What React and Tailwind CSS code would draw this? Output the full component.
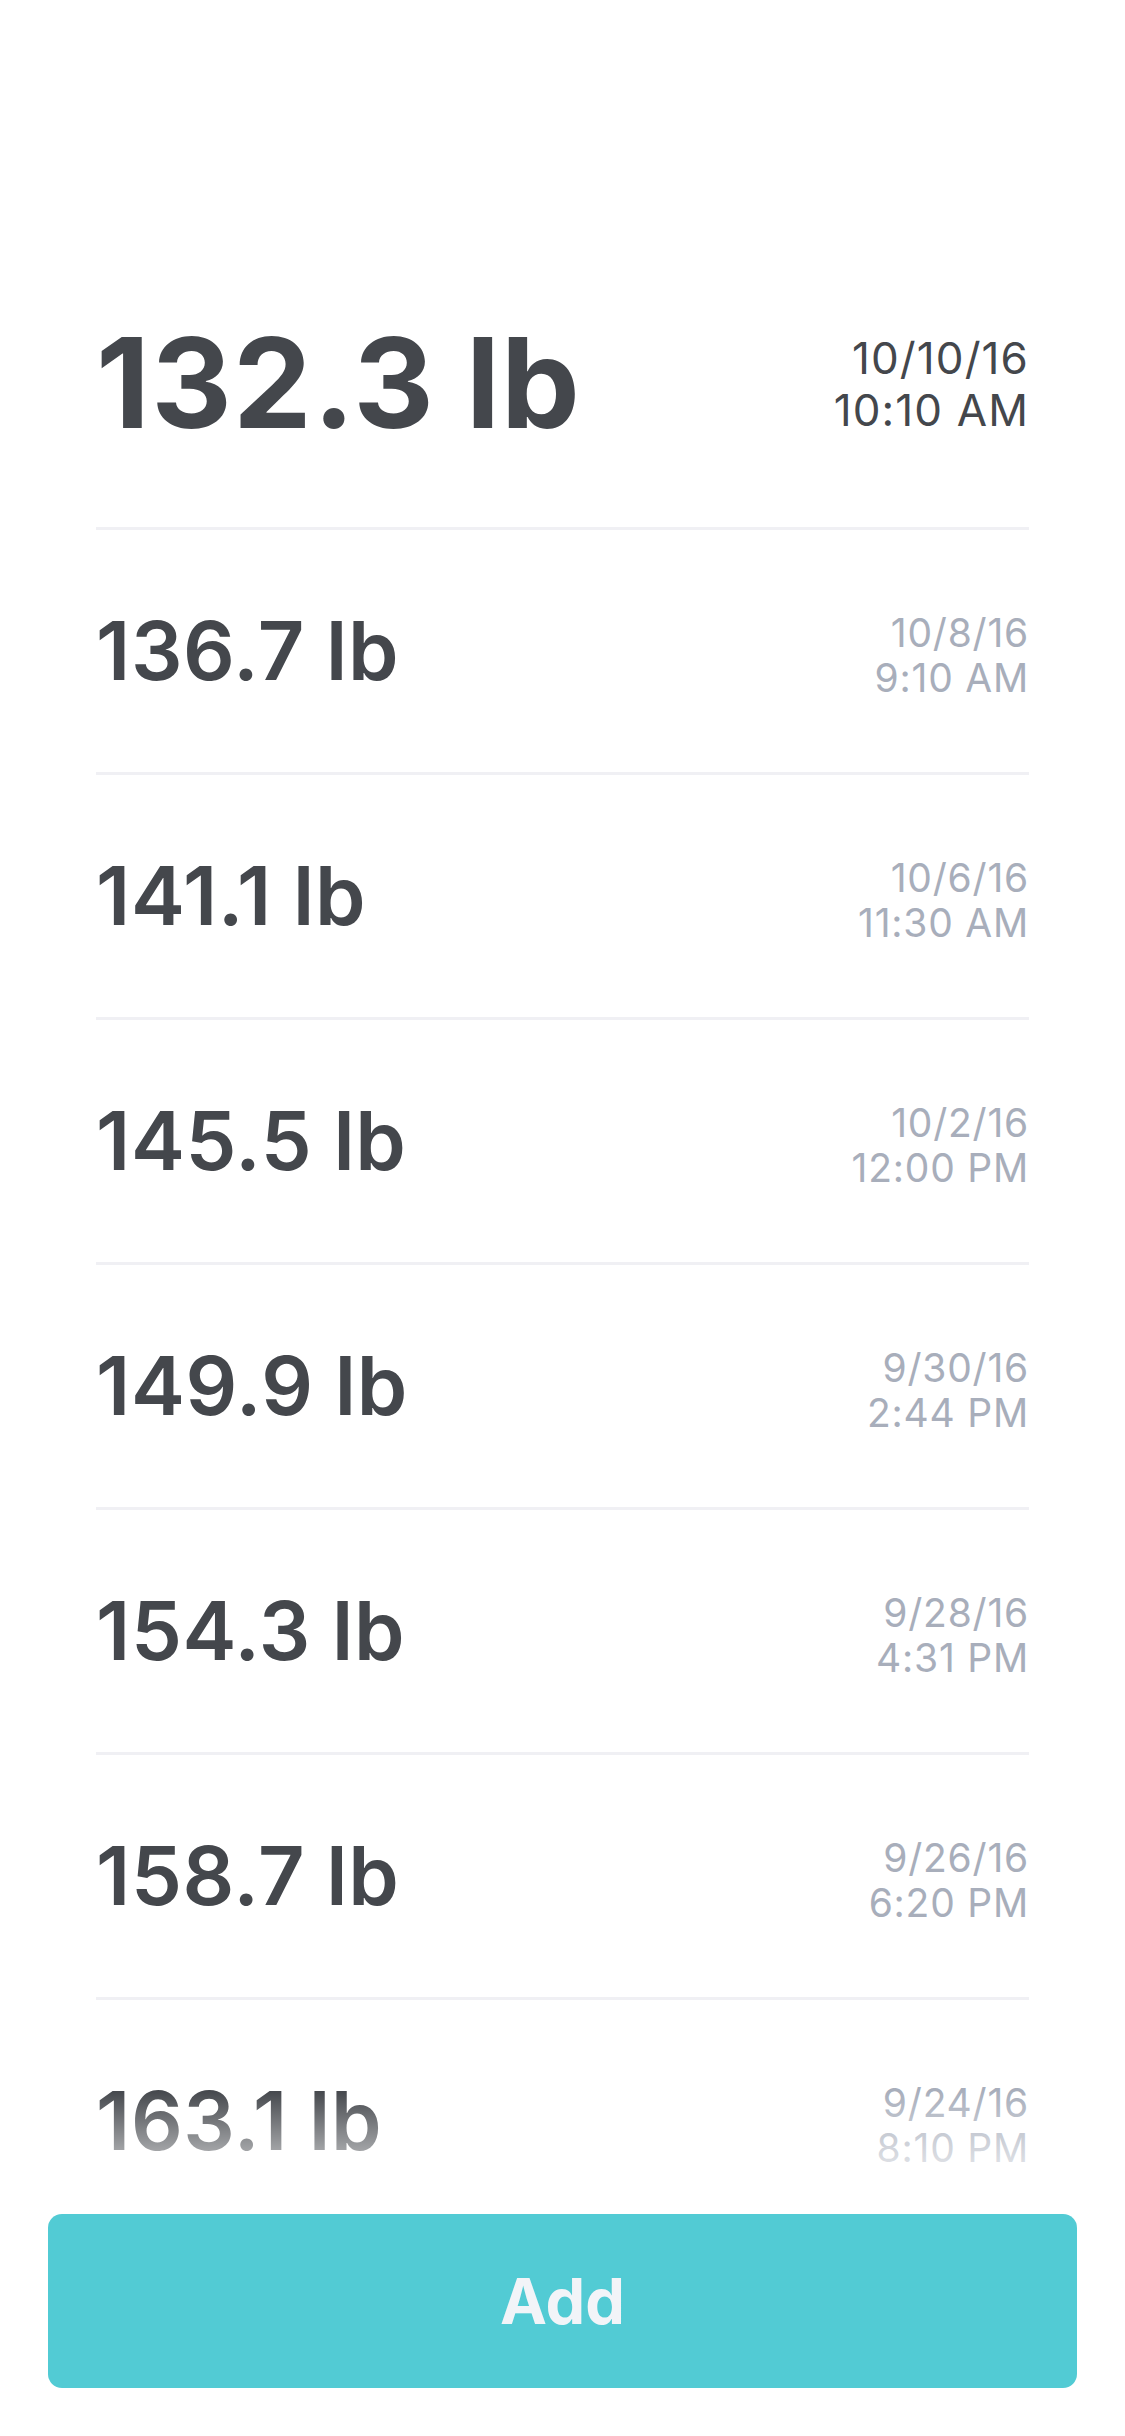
import React from "react";

const entries = [
  { weight: "136.7 lb", date: "10/8/16", time: "9:10 AM" },
  { weight: "141.1 lb", date: "10/6/16", time: "11:30 AM" },
  { weight: "145.5 lb", date: "10/2/16", time: "12:00 PM" },
  { weight: "149.9 lb", date: "9/30/16", time: "2:44 PM" },
  { weight: "154.3 lb", date: "9/28/16", time: "4:31 PM" },
  { weight: "158.7 lb", date: "9/26/16", time: "6:20 PM" },
  { weight: "163.1 lb", date: "9/24/16", time: "8:10 PM" },
  { weight: "167.5 lb", date: "9/22/16", time: "7:45 PM" },
];

const App = () => {
  return (
    <div
      className="relative h-[2436px] w-full overflow-hidden bg-white"
      style={{ fontFamily: "Inter, 'Noto Sans', sans-serif" }}
    >
      <div className="px-[96px]">
        {/* LATEST ENTRY */}
        <div className="flex h-[530px] items-center justify-between border-b-[3px] border-[#f0f0f4] pt-[238px]">
          <p className="text-[125px] font-bold leading-none tracking-[0.01em] text-[#44474c]">
            132.3 lb
          </p>
          <div className="mt-[2px] text-right text-[44px] leading-[52px] tracking-[0.025em] text-[#44474c]">
            <p>10/10/16</p>
            <p>10:10 AM</p>
          </div>
        </div>

        {/* HISTORY */}
        {entries.map((e) => (
          <div
            key={e.weight}
            className="flex h-[245px] items-center justify-between border-b-[3px] border-[#f0f0f4]"
          >
            <p className="text-[81px] font-semibold leading-none tracking-[0.008em] text-[#44474c]">
              {e.weight}
            </p>
            <div className="mt-[7px] text-right text-[39px] leading-[45px] tracking-[0.02em] text-[#a8aebb]">
              <p>{e.date}</p>
              <p>{e.time}</p>
            </div>
          </div>
        ))}
      </div>

      {/* BOTTOM BAR */}
      <div className="absolute inset-x-0 bottom-0">
        <div className="h-[120px] bg-gradient-to-b from-white/0 to-white" />
        <div className="bg-white px-[48px] pb-[48px] pt-[4px]">
          <button className="flex h-[174px] w-full items-center justify-center rounded-[14px] bg-[#52cbd4] text-[63px] font-bold text-[#f2f4f8]">
            Add
          </button>
        </div>
      </div>
    </div>
  );
};

export default App;
